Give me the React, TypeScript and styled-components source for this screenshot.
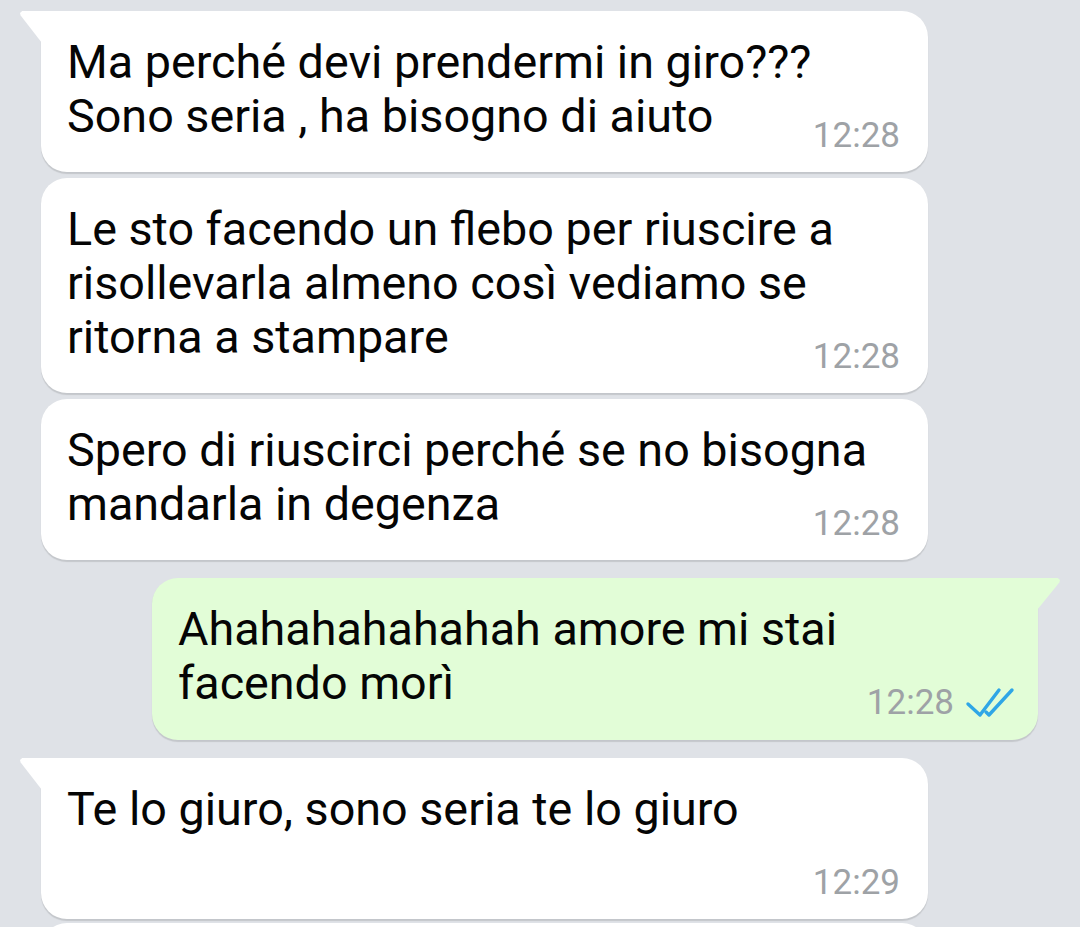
import React from "react";
import styled, { createGlobalStyle, css } from "styled-components";

const GlobalStyle = createGlobalStyle`
  html, body {
    margin: 0;
    padding: 0;
    background: #dfe2e7;
    height: 927px;
    overflow: hidden;
  }
  body {
    font-family: Roboto, "Noto Sans", "Liberation Sans", sans-serif;
    -webkit-font-smoothing: antialiased;
  }
`;

const Chat = styled.div`
  display: flex;
  flex-direction: column;
  padding-top: 11px;
`;

const Bubble = styled.div<{ $out?: boolean; $tail?: boolean; $gap: number }>`
  position: relative;
  box-sizing: border-box;
  width: 886px;
  margin-top: ${(p) => p.$gap}px;
  border-radius: 26px;
  box-shadow: 0 1.5px 1px rgba(0, 0, 0, 0.12);
  ${(p) =>
    p.$out
      ? css`
          align-self: flex-end;
          margin-right: 42px;
          background: #e2fdd7;
          padding: 24px 23px 19px 26px;
        `
      : css`
          align-self: flex-start;
          margin-left: 41px;
          background: #ffffff;
          padding: 24px 28px 18px 26px;
          width: 887px;
        `}
  ${(p) =>
    p.$tail &&
    (p.$out
      ? css`
          border-top-right-radius: 0;
          &::before {
            content: "";
            position: absolute;
            top: 0;
            right: -22px;
            width: 23px;
            height: 32px;
            background: #e2fdd7;
            clip-path: polygon(0 0, 90% 0, 100% 6%, 97% 14%, 0 100%);
          }
        `
      : css`
          border-top-left-radius: 0;
          &::before {
            content: "";
            position: absolute;
            top: 0;
            left: -21px;
            width: 22px;
            height: 32px;
            background: #ffffff;
            clip-path: polygon(10% 0, 100% 0, 100% 100%, 3% 14%, 0 6%);
          }
        `)}
`;

const Text = styled.div`
  font-size: 46.7px;
  line-height: 54px;
  color: #050505;
  white-space: nowrap;
`;

const Meta = styled.div`
  display: flex;
  justify-content: flex-end;
  align-items: center;
  gap: 11px;
  margin-top: -25px;
  height: 36px;
`;

const Time = styled.span`
  font-size: 35px;
  line-height: 36px;
  color: #9ea2a6;
`;

const Ticks = () => (
  <svg width="50" height="32" viewBox="0 0 50 32" style={{ marginTop: -2 }}>
    <g fill="none" stroke="#2fa6e6" strokeWidth="3.4" strokeLinecap="round" strokeLinejoin="round">
      <path d="M3 18 L15 29 L34 4" />
      <path d="M21 26 L24 29 L47 4" />
    </g>
  </svg>
);

type Msg = {
  out?: boolean;
  tail?: boolean;
  gap: number;
  lines: string[];
  time?: string;
};

const messages: Msg[] = [
  { tail: true, gap: 0, lines: ["Ma perché devi prendermi in giro???", "Sono seria , ha bisogno di aiuto"], time: "12:28" },
  {
    gap: 6,
    lines: ["Le sto facendo un flebo per riuscire a", "risollevarla almeno così vediamo se", "ritorna a stampare"],
    time: "12:28",
  },
  { gap: 6, lines: ["Spero di riuscirci perché se no bisogna", "mandarla in degenza"], time: "12:28" },
  { out: true, tail: true, gap: 18, lines: ["Ahahahahahahah amore mi stai", "facendo morì"], time: "12:28" },
  { tail: true, gap: 18, lines: ["Te lo giuro, sono seria te lo giuro", "\u00a0"], time: "12:29" },
  { gap: 4, lines: ["\u00a0", "\u00a0"] },
];

export default function App() {
  return (
    <>
      <GlobalStyle />
      <Chat>
        {messages.map((m, i) => (
          <Bubble key={i} $out={m.out} $tail={m.tail} $gap={m.gap}>
            <Text>
              {m.lines.map((l, j) => (
                <div key={j}>{l}</div>
              ))}
            </Text>
            <Meta>
              {m.time && <Time>{m.time}</Time>}
              {m.out && <Ticks />}
            </Meta>
          </Bubble>
        ))}
      </Chat>
    </>
  );
}
